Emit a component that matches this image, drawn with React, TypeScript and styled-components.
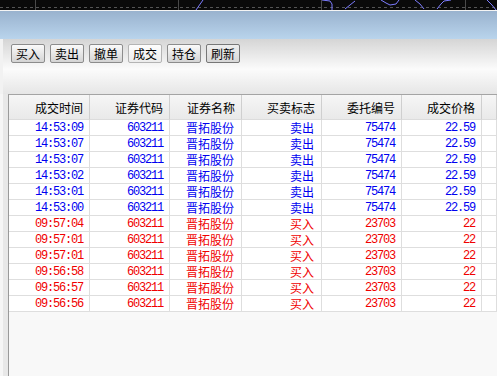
import styled, { createGlobalStyle } from 'styled-components';

type Side = 'buy' | 'sell';

type Trade = {
	time: string;
	code: string;
	name: string;
	side: Side;
	orderNo: string;
	price: string;
};

const GlobalStyle = createGlobalStyle`
	html, body {
		margin: 0;
		padding: 0;
		background: #f8f8f8;
	}
	body {
		font-family: "Noto Sans CJK SC", "Liberation Sans", sans-serif;
		font-size: 12px;
	}
`;

const Screen = styled.div`
	width: 497px;
	height: 376px;
	overflow: hidden;
	display: flex;
	flex-direction: column;
	background: #f8f8f8;
`;

const ChartStrip = styled.svg`
	display: block;
	width: 497px;
	height: 10px;
	flex: none;
	border-bottom: 1px solid #f4f4f4;
`;

const TitleBand = styled.div`
	height: 28px;
	flex: none;
	background: linear-gradient(#99b2ce, #b9d4ec);
`;

const Toolbar = styled.div`
	height: 55px;
	flex: none;
	box-sizing: border-box;
	padding: 5px 0 0 8px;
	display: flex;
	align-items: flex-start;
	gap: 5px;
	background: linear-gradient(#d5d5d5, #fbfbfb 55%, #e6e6e6);
	border-left: 3px solid #f2f2f2;
`;

const ToolButton = styled.button<{ $active?: boolean; $dark?: boolean }>`
	width: 34px;
	height: 19px;
	box-sizing: border-box;
	padding: 0;
	margin: 0;
	font-family: "Noto Sans CJK SC", sans-serif;
	font-size: 12px;
	line-height: 17px;
	color: #000;
	border-radius: 2px;
	border: 1px solid ${(p) => (p.$active ? '#b4b4b4' : p.$dark ? '#777' : '#8c8c8c')};
	background: ${(p) =>
		p.$active
			? 'linear-gradient(#fdfdfd, #ececec)'
			: p.$dark
			? 'linear-gradient(#eeeeee, #d8d8d8)'
			: 'linear-gradient(#fafafa, #d4d4d4)'};
	cursor: pointer;
`;

const TableArea = styled.div`
	flex: 1;
	display: flex;
	background: #e8e8e8;
	border-left: 3px solid #f6f6f6;
`;

const Gutter = styled.div`
	width: 5px;
	flex: none;
`;

const Grid = styled.div`
	flex: 1;
	display: grid;
	grid-template-columns: 81px 80px 72px 80px 80px 80px 1fr;
	grid-template-rows: 25px;
	grid-auto-rows: 16px;
	align-content: start;
	background: #f8f8f8;
	border-left: 1px solid #9a9a9a;
	border-top: 1px solid #a4a4a4;
`;

const Row = styled.div`
	display: contents;
`;

const HeadCell = styled.div`
	box-sizing: border-box;
	display: flex;
	align-items: center;
	justify-content: flex-end;
	padding-right: 6px;
	font-size: 12px;
	color: #000;
	background: linear-gradient(#f6f6f6, #e9e9e9);
	border-right: 1px solid #cfcfcf;
	border-bottom: 1px solid #dcdcdc;
	white-space: nowrap;
`;

const Cell = styled.div<{ $side: Side; $mono?: boolean }>`
	box-sizing: border-box;
	display: flex;
	align-items: center;
	justify-content: flex-end;
	padding-right: ${(p) => (p.$mono ? '6px' : '7px')};
	background: #fff;
	border-right: 1px solid #dedede;
	border-bottom: 1px solid #dedede;
	color: ${(p) => (p.$side === 'sell' ? '#0000f0' : '#f00000')};
	font-family: ${(p) =>
		p.$mono ? '"Liberation Mono", "DejaVu Sans Mono", monospace' : '"Noto Sans CJK SC", sans-serif'};
	font-size: ${(p) => (p.$mono ? '12px' : '12px')};
	letter-spacing: ${(p) => (p.$mono ? '-1.2px' : '0')};
	white-space: nowrap;
`;

const headers = ['成交时间', '证券代码', '证券名称', '买卖标志', '委托编号', '成交价格', ''];

const sellTimes = ['14:53:09', '14:53:07', '14:53:07', '14:53:02', '14:53:01', '14:53:00'];
const buyTimes = ['09:57:04', '09:57:01', '09:57:01', '09:56:58', '09:56:57', '09:56:56'];

const trades: Trade[] = [
	...sellTimes.map((time) => ({
		time,
		code: '603211',
		name: '晋拓股份',
		side: 'sell' as Side,
		orderNo: '75474',
		price: '22.59',
	})),
	...buyTimes.map((time) => ({
		time,
		code: '603211',
		name: '晋拓股份',
		side: 'buy' as Side,
		orderNo: '23703',
		price: '22',
	})),
];

const buttons = ['买入', '卖出', '撤单', '成交', '持仓', '刷新'];

function MiniChart() {
	return (
		<ChartStrip viewBox="0 0 497 10">
			<rect x="0" y="0" width="497" height="10" fill="#0a0a0a" />
			<line x1="0" y1="7.5" x2="497" y2="7.5" stroke="#555" strokeDasharray="3 3" />
			{[35.5, 178.5, 321.5, 465.5].map((x) => (
				<line key={x} x1={x} y1="0" x2={x} y2="10" stroke="#4a4a4a" />
			))}
			<g fill="none" stroke="#7c7cff" strokeWidth="1">
				<polyline points="203,0 196,10" />
				<polyline points="322,0 330,1 332,4 332,10" />
				<polyline points="345,9 355,1" />
				<polyline points="381,0 386,3 390,5 396,4 399,0" />
				<polyline points="415,0 420,4 424,9" />
				<polyline points="437,9 441,4 444,1 451,0" />
				<polyline points="487,0 492,5 496,10" />
			</g>
		</ChartStrip>
	);
}

export default function App() {
	return (
		<>
			<GlobalStyle />
			<Screen>
				<MiniChart />
				<TitleBand />
				<Toolbar>
					{buttons.map((label) => (
						<ToolButton
							key={label}
							$active={label === '成交'}
							$dark={label === '刷新'}
						>
							{label}
						</ToolButton>
					))}
				</Toolbar>
				<TableArea>
					<Gutter />
					<Grid>
						<Row>
							{headers.map((h, i) => (
								<HeadCell key={i}>{h}</HeadCell>
							))}
						</Row>
						{trades.map((t, i) => (
							<Row key={i}>
								<Cell $side={t.side} $mono>{t.time}</Cell>
								<Cell $side={t.side} $mono>{t.code}</Cell>
								<Cell $side={t.side}>{t.name}</Cell>
								<Cell $side={t.side}>{t.side === 'sell' ? '卖出' : '买入'}</Cell>
								<Cell $side={t.side} $mono>{t.orderNo}</Cell>
								<Cell $side={t.side} $mono>{t.price}</Cell>
								<Cell $side={t.side} />
							</Row>
						))}
					</Grid>
				</TableArea>
			</Screen>
		</>
	);
}
